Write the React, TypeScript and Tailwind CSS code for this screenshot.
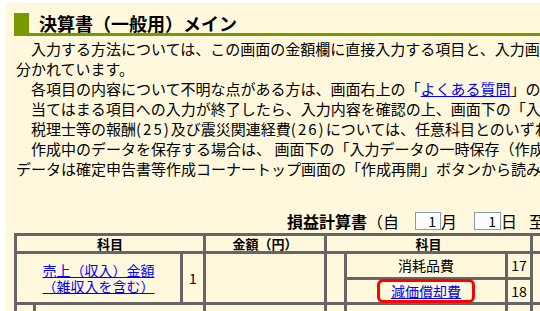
import React from "react";

const cell = "bg-[#fff8dc]";
const IDEO_SPACE = "\u3000";

function Link({ children }: { children: React.ReactNode }) {
  return <a className="cursor-pointer text-[#0000ff] underline">{children}</a>;
}

function ProfitTable() {
  return (
    <div className="ml-[8px] mt-[2px] grid w-max grid-cols-[16px_144px_20px_118px_17px_158px_22px_80px] grid-rows-[15px_23px_22px_30px] gap-[3px] bg-[#666666] p-[3px] text-[14px] text-black">
      {/* header row */}
      <div className={`${cell} col-span-3 text-center text-[13px] font-bold leading-[15px]`}>科目</div>
      <div className={`${cell} text-center text-[13px] font-bold leading-[15px]`}>金額（円）</div>
      <div className={`${cell} col-span-3 text-center text-[13px] font-bold leading-[15px]`}>科目</div>
      <div className={cell}></div>

      {/* 売上 row */}
      <div className={`${cell} col-span-2 row-span-2 flex items-center justify-center text-center leading-[16px]`}>
        <Link>
          売上（収入）金額
          <br />
          （雑収入を含む）
        </Link>
      </div>
      <div className={`${cell} row-span-2 flex items-center justify-center`}>1</div>
      <div className={`${cell} row-span-2`}></div>
      <div className={`${cell} row-span-2`}></div>
      <div className={`${cell} flex items-center justify-center`}>消耗品費</div>
      <div className={`${cell} flex items-center justify-center`}>17</div>
      <div className={`${cell} row-span-2`}></div>
      <div className={`${cell} flex items-center justify-center`}>
        <span className="inline-flex h-[24px] items-center rounded-[6px] border-[3px] border-[#ff0000] px-[11px] leading-[18px]">
          <Link>減価償却費</Link>
        </span>
      </div>
      <div className={`${cell} flex items-center justify-center`}>18</div>

      {/* next row (cut off) */}
      <div className={cell}></div>
      <div className={`${cell} col-span-2`}></div>
      <div className={cell}></div>
      <div className={cell}></div>
      <div className={cell}></div>
      <div className={cell}></div>
      <div className={cell}></div>
    </div>
  );
}

export default function App() {
  return (
    <div className="h-[311px] w-[540px] overflow-hidden bg-white pl-[6px] pt-[3px] font-['Noto_Sans_CJK_JP',sans-serif] [text-spacing-trim:space-all]">
      <div className="h-full overflow-hidden bg-[#fff8dc]">
        {/* title */}
        <div className="ml-[8px] mt-[10px] flex h-[23px] border-b-[3px] border-[#789904]">
          <div className="w-[15px] bg-[#789904]"></div>
          <h1 className="ml-[10px] whitespace-nowrap pt-[1px] text-[18px] font-bold leading-[19px] text-black">
            決算書（一般用）メイン
          </h1>
        </div>

        {/* description */}
        <div className="mt-[3px] whitespace-nowrap pl-[10px] text-[15px] leading-[20px] text-black">
          <p>{IDEO_SPACE}入力する方法については、この画面の金額欄に直接入力する項目と、入力画面で入力する項目に</p>
          <p>分かれています。</p>
          <p>
            {IDEO_SPACE}各項目の内容について不明な点がある方は、画面右上の「<Link>よくある質問</Link>」の内容をご確認ください。
          </p>
          <p>{IDEO_SPACE}当てはまる項目への入力が終了したら、入力内容を確認の上、画面下の「入力終了（次へ）」ボタンをクリックしてください。</p>
          <p>
            {IDEO_SPACE}税理士等の報酬<span className="tracking-[2px]">(25)</span>及び震災関連経費
            <span className="tracking-[2px]">(26)</span>については、任意科目とのいずれかに入力してください。
          </p>
          <p>{IDEO_SPACE}作成中のデータを保存する場合は、 画面下の「入力データの一時保存（作成途中のデータの保存）」ボタンをクリックしてください。保存した</p>
          <p>データは確定申告書等作成コーナートップ画面の「作成再開」ボタンから読み込むことができます。</p>
        </div>

        {/* statement heading */}
        <div className="mt-[32px] flex h-[20px] items-center whitespace-nowrap pl-[281px] text-[16px] text-black">
          <span className="font-bold">損益計算書</span>
          <span>（自</span>
          <input
            readOnly
            value="1"
            className="ml-[16px] h-[18px] w-[26px] border border-[#7f9db9] bg-white pr-[4px] text-right text-[14px] leading-[16px] outline-none"
          />
          <span>月</span>
          <input
            readOnly
            value="1"
            className="ml-[17px] h-[18px] w-[27px] border border-[#7f9db9] bg-white pr-[4px] text-right text-[14px] leading-[16px] outline-none"
          />
          <span>日</span>
          <span className="ml-[12px]">至</span>
        </div>

        <ProfitTable />
      </div>
    </div>
  );
}
